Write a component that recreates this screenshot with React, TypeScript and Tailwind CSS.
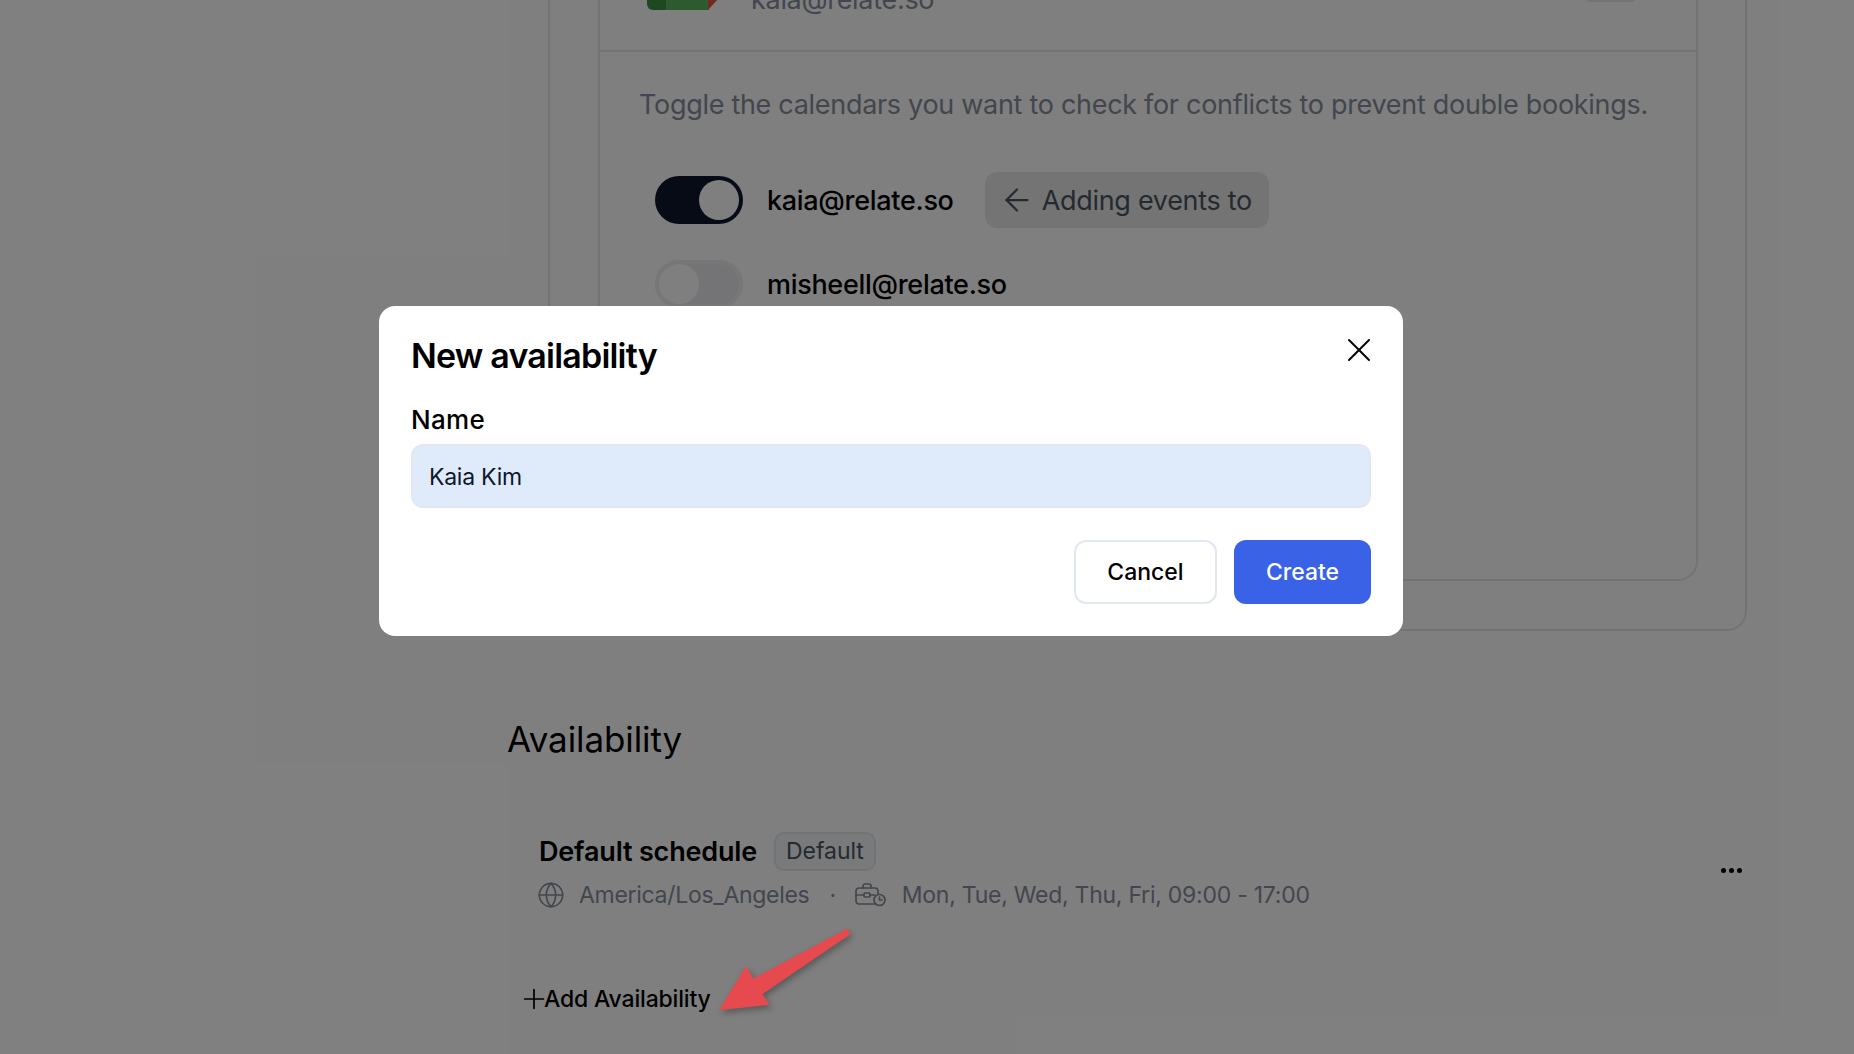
import { ArrowLeft, Globe, Plus, X } from "lucide-react";

function Toggle({ on }: { on: boolean }) {
  return (
    <div
      className={`flex items-center w-[88px] h-[48px] rounded-full px-[4px] ${
        on ? "bg-[#0f172a] justify-end" : "bg-[#e8e9ec] ring-4 ring-inset ring-[#eeeef0] justify-start"
      }`}
    >
      <div className="w-[40px] h-[40px] rounded-full bg-white" />
    </div>
  );
}

function BriefcaseClock() {
  return (
    <svg width="31" height="24" viewBox="0 0 31 24" fill="none" stroke="#868c9c" strokeWidth="1.7" strokeLinecap="round" strokeLinejoin="round">
      <path d="M20 21H4a3 3 0 0 1-3-3V8a3 3 0 0 1 3-3h16a3 3 0 0 1 3 3v3" />
      <path d="M8 5V3a2 2 0 0 1 2-2h4a2 2 0 0 1 2 2v2" />
      <path d="M1 12h8M15 12h5" />
      <rect x="9" y="10" width="6" height="4" rx="1" />
      <circle cx="24.5" cy="17" r="5.5" fill="#fff" />
      <path d="M24.5 14v3h2.5" />
    </svg>
  );
}

function Arrow() {
  return (
    <svg width="150" height="100" viewBox="0 0 150 100" className="drop-shadow-[2px_3px_3px_rgba(0,0,0,0.3)]">
      <path
        d="M2 88 L27 47 L34 59 L128 9 L130 13 L42 73 L49 83 Z"
        fill="#e64a4f"
        stroke="#e64a4f"
        strokeWidth="2"
        strokeLinejoin="round"
      />
    </svg>
  );
}

function CalendarCorner() {
  return (
    <svg width="72" height="12" viewBox="0 0 72 12">
      <path d="M0 0h20v12H6a6 6 0 0 1-6-6z" fill="#3c9040" />
      <rect x="19" y="0" width="43" height="12" fill="#5cb45e" />
      <path d="M61 0h11l-11 12z" fill="#e5533d" />
    </svg>
  );
}

export default function App() {
  return (
    <div className="relative h-[1054px] overflow-hidden bg-white text-black font-['Inter',sans-serif]">
      <div className="pl-[507px]">
        {/* calendar settings card, scrolled past the top */}
        <div className="ml-[41px] w-[1199px] h-[631px] border-x-2 border-b-2 border-[#e5e7eb] rounded-b-[20px]">
          <div className="ml-[48px] w-[1100px] h-[581px] border-x-2 border-b-2 border-[#e5e7eb] rounded-b-[20px]">
            <div className="relative h-[52px] border-b-2 border-[#e5e7eb] overflow-hidden">
              <div className="absolute left-[47px] top-[-2px]">
                <CalendarCorner />
              </div>
              <span className="absolute left-[151px] top-[-16px] text-[27px] leading-[32px] tracking-[-0.3px] text-[#868c9c]">kaia@relate.so</span>
              <div className="absolute right-[59px] top-[-20px] w-[52px] h-[22px] rounded-[6px] bg-[#e5e7eb]" />
            </div>
            <p className="ml-[39px] mt-[35px] text-[27px] leading-[36px] tracking-[-0.3px] text-[#868c9c] whitespace-nowrap">
              Toggle the calendars you want to check for conflicts to prevent double bookings.
            </p>
            <div className="ml-[55px] mt-[53px] flex flex-col gap-[36px]">
              <div className="flex items-center gap-[24px] h-[48px]">
                <Toggle on />
                <span className="pt-[2px] text-[27px] font-medium tracking-[-0.3px]">kaia@relate.so</span>
                <div className="flex items-center h-[56px] pl-[14px] pr-[17px] ml-[7px] rounded-[12px] bg-[#e8e9eb] text-[27px] tracking-[-0.3px] text-[#4b5563]">
                  <ArrowLeft size={36} strokeWidth={1.5} color="#4b5563" />
                  <span className="ml-[7px] pt-[2px]">Adding events to</span>
                </div>
              </div>
              <div className="flex items-center gap-[24px] h-[48px]">
                <Toggle on={false} />
                <span className="pt-[2px] text-[27px] font-medium tracking-[-0.3px]">misheell@relate.so</span>
              </div>
            </div>
          </div>
        </div>

        <h2 className="mt-[86px] text-[35px] leading-[44px] tracking-[-0.1px]">Availability</h2>

        <div className="mt-[71px] ml-[32px] w-[1203px] flex items-center justify-between">
          <div>
            <div className="flex items-center gap-[17px] h-[39px]">
              <span className="pt-[2px] text-[27px] font-semibold tracking-[-0.17px]">Default schedule</span>
              <span className="flex items-center h-[39px] px-[10px] border-2 border-[#e5e7eb] rounded-[10px] bg-[#f3f4f6] text-[23px] tracking-[-0.05px] text-[#4b5563]">
                Default
              </span>
            </div>
            <div className="mt-[8px] flex items-center h-[32px] text-[23px] tracking-[-0.3px] text-[#868c9c]">
              <Globe size={28} strokeWidth={1.4} color="#868c9c" className="-ml-[2px]" />
              <span className="ml-[14px]">America/Los_Angeles</span>
              <span className="ml-[20px] mr-[19px]">·</span>
              <BriefcaseClock />
              <span className="ml-[16px] tracking-[-0.25px]">Mon, Tue, Wed, Thu, Fri, 09:00 - 17:00</span>
            </div>
          </div>
          <div className="flex gap-[3px] mb-[2px]">
            <span className="w-[5px] h-[5px] rounded-full bg-black" />
            <span className="w-[5px] h-[5px] rounded-full bg-black" />
            <span className="w-[5px] h-[5px] rounded-full bg-black" />
          </div>
        </div>

        <div className="mt-[72px] ml-[11px] flex items-center h-[32px] text-[23px] font-medium tracking-[-0.17px]">
          <Plus size={32} strokeWidth={1.3} className="-mr-[6px]" />
          <span>Add Availability</span>
        </div>
      </div>

      {/* dim layer */}
      <div className="absolute inset-0 bg-black/50" />

      <div className="absolute left-[719px] top-[921px]">
        <Arrow />
      </div>

      <div className="absolute left-[379px] top-[306px] w-[1024px] h-[330px] rounded-[16px] bg-white px-[32px] pt-[28px]">
        <button type="button" className="absolute right-[24px] top-[24px]">
          <X size={40} strokeWidth={1.2} />
        </button>
        <h3 className="text-[34px] leading-[44px] font-semibold tracking-[-0.8px]">New availability</h3>
        <label className="block mt-[24px] text-[26px] leading-[36px] font-medium tracking-[0.3px]">Name</label>
        <div className="mt-[6px] flex items-center h-[64px] px-[16px] pt-[2px] border-2 border-[#e2e8f0] rounded-[12px] bg-[#dfebfb] text-[23px] tracking-[-0.25px] text-[#0f172a]">
          Kaia Kim
        </div>
        <div className="mt-[32px] flex justify-end gap-[17px]">
          <button type="button" className="w-[143px] h-[64px] border-2 border-[#e2e8f0] rounded-[12px] bg-white text-[23px] font-medium">
            Cancel
          </button>
          <button type="button" className="w-[137px] h-[64px] rounded-[12px] bg-[#3a62e6] text-[23px] font-medium text-white">
            Create
          </button>
        </div>
      </div>
    </div>
  );
}
